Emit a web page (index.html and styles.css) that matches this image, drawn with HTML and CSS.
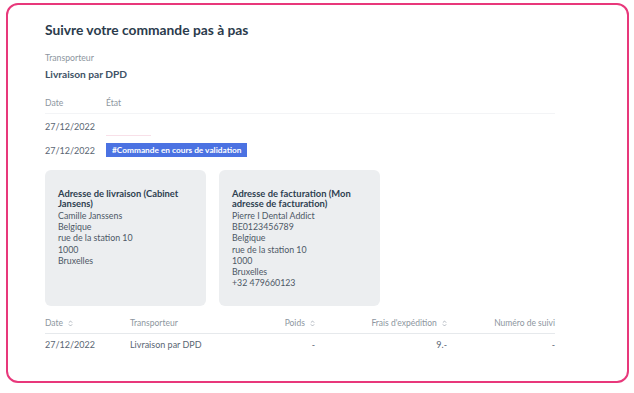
FILE: index.html
```html
<!doctype html>
<html>
  <head>
    <meta charset="UTF-8">
    <title>Suivi de commande</title>
    <link rel="stylesheet" href="styles.css">
  </head>
  <body>
    <div class="panel">
      <h2 class="title">Suivre votre commande pas à pas</h2>

      <div class="carrier">
        <p class="label">Transporteur</p>
        <p class="carrier-name">Livraison par DPD</p>
      </div>

      <div class="status">
        <div class="status-head">
          <span class="status-date">Date</span>
          <span>État</span>
        </div>
        <div class="status-row">
          <span class="status-date">27/12/2022</span>
          <span class="badge-empty"></span>
        </div>
        <div class="status-row">
          <span class="status-date">27/12/2022</span>
          <span class="badge">#Commande en cours de validation</span>
        </div>
      </div>

      <div class="addresses">
        <div class="address">
          <h4>Adresse de livraison (Cabinet Jansens)</h4>
          <p>Camille Janssens</p>
          <p>Belgique</p>
          <p>rue de la station 10</p>
          <p>1000</p>
          <p>Bruxelles</p>
        </div>
        <div class="address">
          <h4>Adresse de facturation (Mon adresse de facturation)</h4>
          <p>Pierre I Dental Addict</p>
          <p>BE0123456789</p>
          <p>Belgique</p>
          <p>rue de la station 10</p>
          <p>1000</p>
          <p>Bruxelles</p>
          <p>+32 479660123</p>
        </div>
      </div>

      <div class="shipments">
        <div class="ship-row ship-head">
          <span>Date <svg class="sort" viewBox="0 0 6 8"><path d="M1 3 L3 1 L5 3 M1 5 L3 7 L5 5"/></svg></span>
          <span>Transporteur</span>
          <span class="num">Poids <svg class="sort" viewBox="0 0 6 8"><path d="M1 3 L3 1 L5 3 M1 5 L3 7 L5 5"/></svg></span>
          <span class="num">Frais d'expédition <svg class="sort" viewBox="0 0 6 8"><path d="M1 3 L3 1 L5 3 M1 5 L3 7 L5 5"/></svg></span>
          <span class="num">Numéro de suivi</span>
        </div>
        <div class="ship-row">
          <span>27/12/2022</span>
          <span>Livraison par DPD</span>
          <span class="num">-</span>
          <span class="num">9.-</span>
          <span class="num">-</span>
        </div>
      </div>
    </div>
  </body>
</html>
```

FILE: styles.css
```css
body{
  margin: 0;
  background: #fff;
  font-family: Lato, "Open Sans", sans-serif;
  color: #2e3f50;
}
p, h2, h4{
  margin: 0;
}
.panel{
  margin: 3px 0 0 6px;
  width: 623px;
  height: 380px;
  box-sizing: border-box;
  border: 2px solid #e8387b;
  border-radius: 12px;
  padding: 16px 72px 0 37px;
}
.title{
  font-size: 13.8px;
  font-weight: 700;
  color: #2b3b4c;
  line-height: 18px;
}
.carrier{
  margin-top: 13px;
}
.label{
  font-size: 8.7px;
  color: #8d96a0;
  line-height: 12px;
}
.carrier-name{
  margin-top: 3px;
  font-size: 10.2px;
  font-weight: 700;
  color: #405266;
  line-height: 14px;
}
.status{
  margin-top: 15px;
}
.status-head{
  display: flex;
  color: #8d96a0;
  font-size: 8.6px;
  line-height: 14px;
  padding-bottom: 3px;
  border-bottom: 1px solid #f3f4f6;
}
.status-date{
  width: 61px;
}
.status-row{
  display: flex;
  align-items: center;
  height: 24px;
  font-size: 9px;
  color: #5a6673;
}
.badge-empty{
  align-self: flex-end;
  width: 45px;
  height: 1px;
  margin-bottom: 2px;
  background: #f8e0e8;
}
.badge{
  background: #4b72e2;
  color: #fff;
  font-size: 8.3px;
  font-weight: 700;
  padding: 0 6px;
  height: 14px;
  line-height: 14px;
}
.addresses{
  display: flex;
  gap: 13px;
  margin-top: 8px;
}
.address{
  width: 161px;
  height: 136px;
  box-sizing: border-box;
  background: #eceef0;
  border-radius: 6px;
  padding: 19px 10px 0 13px;
  font-size: 8.8px;
  color: #4c5866;
  line-height: 11.2px;
}
.address h4{
  font-size: 9.4px;
  font-weight: 700;
  color: #2e3f50;
  line-height: 10px;
  margin-bottom: 1px;
}
.shipments{
  margin-top: 10px;
}
.ship-row{
  display: grid;
  grid-template-columns: 85px 1fr 80px 132px 108px;
  height: 20px;
  align-items: center;
  color: #5a6673;
  font-size: 9px;
}
.ship-head{
  height: auto;
  line-height: 14px;
  padding-bottom: 3px;
  color: #8d96a0;
  font-size: 8.5px;
  border-bottom: 1px solid #e6e9ec;
}
.num{
  text-align: right;
}
.sort{
  width: 5px;
  height: 7px;
  margin-left: 3px;
  vertical-align: -1px;
  fill: none;
  stroke: #9aa3ac;
  stroke-width: 0.9;
}
```
